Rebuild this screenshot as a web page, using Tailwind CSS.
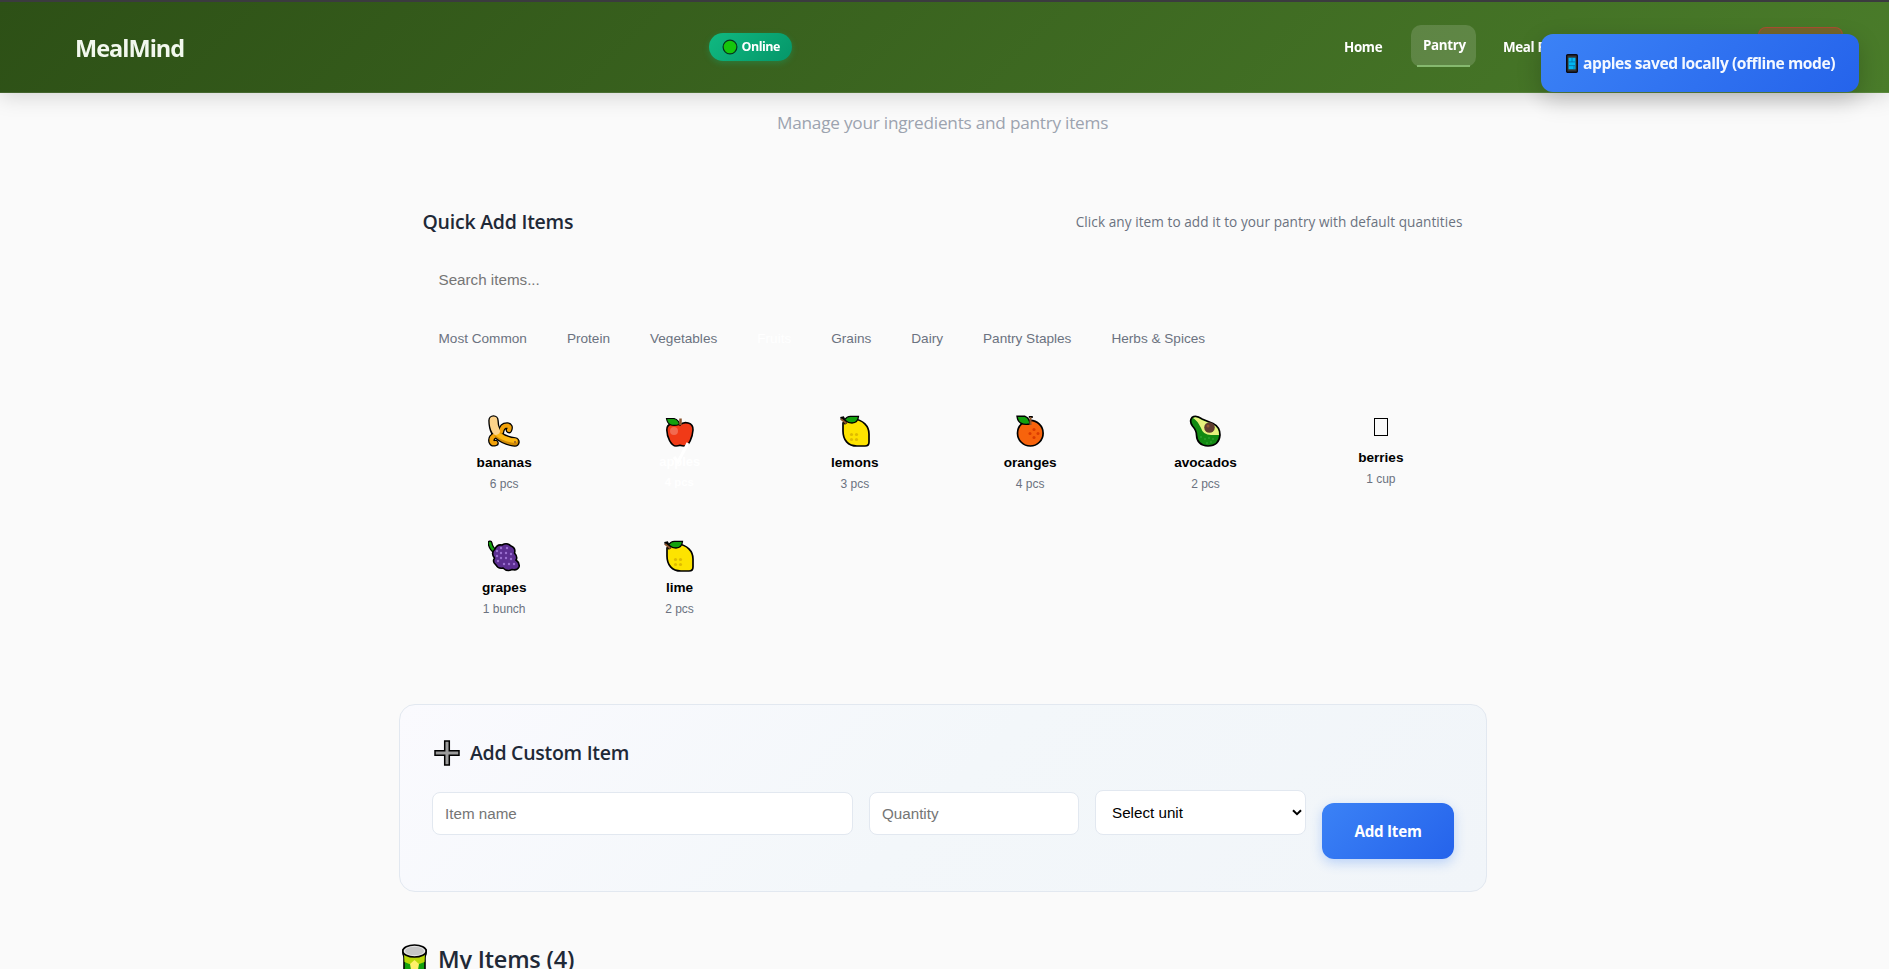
<!DOCTYPE html>
<html lang="en">
<head>
<meta charset="utf-8">
<title>MealMind</title>
<script src="https://cdn.jsdelivr.net/npm/@tailwindcss/browser@4"></script>
</head>
<body class="h-[969px] overflow-hidden bg-[#fafafa] font-['Open_Sans','Noto_Sans',sans-serif]">
<svg class="hidden">
  <symbol id="lemon" viewBox="0 0 32 32">
    <path d="M4 8C7 3.5 11 4 15 4C24 5 30 11 30 19V27Q30 31 26 31H18C9 31 4 25 4 16Z" fill="#fde300" stroke="#000" stroke-width="1.700"/>
    <path d="M1.500 3.500L4 3L7 9" fill="none" stroke="#000" stroke-width="3"/>
    <path d="M5.500 5Q8 1 12 1.300H19.500Q19 8 13 8Q9 8 5.500 5Z" fill="#13a10e" stroke="#000" stroke-width="1.300"/>
    <path d="M2 4L7.500 8.500" stroke="#8e562e" stroke-width="1.800"/>
    <g fill="#dfbb00"><circle cx="12.500" cy="19.500" r="1.600"/><circle cx="17.500" cy="19.500" r="1.600"/><circle cx="12.500" cy="24.500" r="1.600"/><circle cx="17.500" cy="24.500" r="1.600"/></g>
  </symbol>
</svg>

<header class="fixed inset-x-0 top-0 z-10 flex h-[93px] border-t-2 border-t-[#3b3b3f] bg-[linear-gradient(135deg,#2d5016,#4a7c2a)] shadow-[0_4px_20px_rgba(0,0,0,0.15),inset_0_-1px_0_rgba(255,255,255,0.1)]">
  <div class="ml-[75px] mt-[28px] w-[634px]"><span class="whitespace-nowrap text-[23.5px] leading-[36px] font-bold tracking-[-0.980px] text-[#f2f8ee]">MealMind</span></div>
  <div class="mt-[31px] flex h-7 w-[83px] items-center rounded-[14px] bg-[linear-gradient(135deg,#10b981,#059669)] pl-[12.5px] shadow-[0_2px_6px_rgba(16,185,129,0.3)]">
    <svg class="mr-[4px] size-[16px] shrink-0" viewBox="0 0 16 16"><circle cx="8" cy="8" r="6.900" fill="#16c60c" stroke="#06351f" stroke-width="1.200"/></svg>
    <span class="whitespace-nowrap text-[12.5px] leading-5 font-bold tracking-[-0.500px] text-white">Online</span>
  </div>
  <nav class="ml-[541px] mt-[23px] flex gap-4 text-[13.4px] font-bold tracking-[-0.350px] text-white">
    <a class="mt-[9px] w-[62px] pl-[11px] leading-[26px] whitespace-nowrap">Home</a>
    <a class="relative h-[42px] w-[65px] rounded-[10px] bg-white/15 px-3 leading-[41px] whitespace-nowrap">Pantry<i class="absolute bottom-0 left-[6px] h-[2px] w-[53px] bg-[#86b96f]"></i></a>
    <a class="mt-[9px] w-[110px] pl-[11px] leading-[26px] whitespace-nowrap">Meal Planner</a>
  </nav>
  <a class="absolute left-[1758px] top-[25px] h-[38px] w-[85px] rounded-[8px] border border-red-500/40 bg-red-500/25"></a>
</header>

<div class="fixed left-[1541px] top-[34px] z-20 flex h-[58px] w-[318px] items-center rounded-[12px] bg-[linear-gradient(135deg,#3b82f6,#2563eb)] pl-[25px] shadow-[0_8px_24px_rgba(0,0,0,0.2)]">
  <svg class="mr-[5px] h-[19px] w-[12px] shrink-0" viewBox="0 0 12 18" preserveAspectRatio="none"><rect x=".7" y=".7" width="10.600" height="16.600" rx="1" fill="#333" stroke="#0a0a14" stroke-width="1.400"/><rect x="2.500" y="3.500" width="7" height="11" fill="#00b7f5"/><path d="M2.500 7.500h7M2.500 11h7M6 3.500v4M8 11v3.500" stroke="#0a6ea8" stroke-width=".8"/></svg>
  <span class="whitespace-nowrap text-[15.6px] leading-6 font-bold tracking-[-0.450px] text-[#f4f8ff]">apples saved locally (offline mode)</span>
</div>

<main class="pt-[109px]">
  <p class="pl-[777px] text-[17.2px] leading-7 tracking-[-0.230px] text-[#9ca3af]">Manage your ingredients and pantry items</p>

  <section class="ml-[422.5px] mt-[70px] w-[1040px]">
    <div class="flex items-center justify-between">
      <h3 class="text-[19.5px] leading-[30px] font-semibold tracking-[-0.240px] text-[#1f2937]">Quick Add Items</h3>
      <p class="text-[13.6px] leading-5 tracking-[0.060px] text-[#6b7280]">Click any item to add it to your pantry with default quantities</p>
    </div>
    <div class="mt-[31px] pl-4 font-['Liberation_Sans',sans-serif] text-[15.2px] leading-6 text-[#757575]">Search items...</div>
    <div class="mt-[37px] flex gap-2 font-['Liberation_Sans',sans-serif] text-[13.6px] leading-5 text-[#6b7280] [&>span]:whitespace-nowrap [&>span]:px-4">
      <span>Most Common</span><span>Protein</span><span>Vegetables</span><span class="text-white">Fruits</span><span>Grains</span><span>Dairy</span><span>Pantry Staples</span><span>Herbs &amp; Spices</span>
    </div>
    <div class="mt-[50px] grid auto-rows-[113px] grid-cols-6 gap-3 text-center font-['Liberation_Sans',sans-serif] text-[12px] leading-4 text-[#6b7280] [&_b]:mb-[4px] [&_b]:mt-[7px] [&_b]:block [&_b]:text-[13.6px] [&_b]:leading-[18px] [&_b]:text-black [&_svg]:mx-auto [&_svg]:size-8 [&>div]:pt-4">
      <div>
        <svg viewBox="0 0 32 32" fill="none" stroke-linecap="round" stroke-linejoin="round">
          <g stroke="#000"><path d="M5.500 5.500Q5.500 12 8 17" stroke-width="10.500"/><path d="M10 20Q17 26 27 27" stroke-width="9.500"/><path d="M13 17Q14 10.500 19 10.500Q23 11 21 15" stroke-width="6.500"/><path d="M8 20Q2.500 22 3.500 26.500Q4.500 29 7.500 28" stroke-width="6.500"/></g>
          <path d="M13 17Q14 10.500 19 10.500Q23 11 21 15" stroke="#f2a20a" stroke-width="4"/>
          <path d="M8 20Q2.500 22 3.500 26.500Q4.500 29 7.500 28" stroke="#f2a20a" stroke-width="4"/>
          <path d="M10 20Q17 26 27 27" stroke="#d08a06" stroke-width="6.800"/>
          <path d="M9 19Q17 25 27 25.800" stroke="#fdb813" stroke-width="4.500"/>
          <path d="M5.500 5.500Q5.500 12 8 16" stroke="#fdd38a" stroke-width="7.800"/>
          <circle cx="27" cy="27" r="1" fill="#8e562e"/>
        </svg><b>bananas</b>6 pcs
      </div>
      <div class="relative">
        <svg viewBox="0 0 32 32" class="relative left-[0.5px]"><path d="M16 10C20 6 29.500 7 29 15C28.500 22 25 31 20.500 31Q18 31 16 30.300Q14 31 12 31C7 31 3 22 2.800 15C2.500 8 12 6 16 10Z" fill="#f03a17" stroke="#000" stroke-width="1.600"/><path d="M2.500 3.500H10Q15 5 15.500 9.500Q4 13 2.500 3.500Z" fill="#13a10e" stroke="#000" stroke-width="1.200"/><path d="M16.500 3.500V10" stroke="#8e562e" stroke-width="2.500"/><circle cx="10" cy="16" r="4" fill="#f26a50"/></svg>
        <b class="origin-top scale-95 text-white!">apples</b><strong class="inline-block -translate-y-0.5 scale-95 text-white">4 pcs</strong>
        <svg class="absolute left-[66px] top-[41px] overflow-visible" viewBox="0 0 32 32" fill="none"><path d="M10 17L14 22L24 3" stroke="#fff" stroke-width="3"/></svg>
      </div>
      <div><svg><use href="#lemon"/></svg><b>lemons</b>3 pcs</div>
      <div>
        <svg viewBox="0 0 32 32"><circle cx="16.300" cy="18.200" r="12.800" fill="#f7630c" stroke="#000" stroke-width="1.700"/><path d="M3 1.300H11Q15.500 3 16 9Q4 11 3 1.300Z" fill="#13a10e" stroke="#000" stroke-width="1.400"/><path d="M16.800 1V3" stroke="#000" stroke-width="4"/><path d="M16.500 2V10" stroke="#8e562e" stroke-width="2"/><g fill="#da3b01"><circle cx="20" cy="14.500" r="1.500"/><circle cx="16" cy="18.500" r="1.500"/><circle cx="24" cy="18.500" r="1.500"/><circle cx="20" cy="22.500" r="1.500"/></g></svg><b>oranges</b>4 pcs
      </div>
      <div>
        <svg viewBox="0 0 32 32"><path d="M3 2.500Q7-.500 13 4L24 8.500Q31 12 31 20Q30 31 19 31Q8 30.500 7.500 20Q7.500 15.500 3.500 11Q0 6 3 2.500Z" fill="#128a12" stroke="#000" stroke-width="1.700"/><path d="M4 3Q7 .800 13 5L24 9.500Q30 12.500 30 20H22Q14 20 12 13Q8 5 4 3Z" fill="#e5f27c"/><circle cx="20.500" cy="12.500" r="5.300" fill="#603d30"/><circle cx="19" cy="11" r="1.500" fill="#8e562e"/><g fill="#3cab3c"><circle cx="12" cy="22" r=".8"/><circle cx="16" cy="24" r=".8"/><circle cx="20" cy="23" r=".8"/><circle cx="24" cy="24" r=".8"/><circle cx="18" cy="28" r=".8"/><circle cx="22" cy="27" r=".8"/></g></svg><b>avocados</b>2 pcs
      </div>
      <div><div class="mx-auto mt-[3px] h-[18px] w-[14px] border border-black"></div><b class="mt-[13px]!">berries</b>1 cup</div>
      <div>
        <svg viewBox="0 0 32 32"><path d="M2 3Q3 9 8 12" fill="none" stroke="#000" stroke-width="5" stroke-linecap="round"/><path d="M2 3Q3 9 8 12" fill="none" stroke="#13a10e" stroke-width="2.500" stroke-linecap="round"/><path d="M7 9Q9 4 14 5Q19 2 23 6Q28 8 26.500 13Q30 17 28 20Q32 23 31 27Q29 31 24 29.500Q19 32 15 28Q10 29 8 25Q4 22 6.500 18Q2.500 13 7 9Z" fill="#5c2e91" stroke="#000" stroke-width="1.600"/><g fill="#9a6fd0"><circle cx="9" cy="11" r="1.200"/><circle cx="13" cy="8" r="1.200"/><circle cx="19" cy="8" r="1.200"/><circle cx="13" cy="13" r="1.200"/><circle cx="18" cy="13" r="1.200"/><circle cx="23" cy="14" r="1.200"/><circle cx="9" cy="16" r="1.200"/><circle cx="13" cy="18" r="1.200"/><circle cx="18" cy="18" r="1.200"/><circle cx="23" cy="19" r="1.200"/><circle cx="10" cy="21" r="1.200"/><circle cx="16" cy="24" r="1.200"/><circle cx="21" cy="24" r="1.200"/><circle cx="26" cy="24" r="1.200"/></g></svg><b>grapes</b>1 bunch
      </div>
      <div><svg><use href="#lemon"/></svg><b>lime</b>2 pcs</div>
    </div>
  </section>

  <section class="ml-[399px] mt-[67px] h-[188px] w-[1088px] rounded-[16px] border border-[#e2e8f0] bg-[linear-gradient(135deg,#fafafe_0%,#f3f7fa_50%,#f1f5f9_100%)] px-8 pt-8">
    <h3 class="flex h-[31px] items-center text-[19.5px] leading-[30px] font-semibold tracking-[-0.280px] text-[#1f2937]">
      <svg class="ml-[1.5px] mr-[10.5px] size-[26px]" viewBox="0 0 26 26"><path d="M10.700 1h4.600v9.700H25v4.600h-9.700V25h-4.600v-9.700H1v-4.600h9.700Z" fill="#9b9b9b" stroke="#000" stroke-width="1.500"/></svg>
      <span class="whitespace-nowrap">Add Custom Item</span>
    </h3>
    <div class="mt-[22px] flex items-start font-['Liberation_Sans',sans-serif] text-[15.2px]">
      <div class="mt-[2px] h-[43px] w-[421px] rounded-[8px] border border-[#e2e8f0] bg-white pl-3 leading-[42px] text-[#757575]">Item name</div>
      <div class="ml-4 mt-[2px] h-[43px] w-[210px] rounded-[8px] border border-[#e2e8f0] bg-white pl-3 leading-[42px] text-[#757575]">Quantity</div>
      <div class="ml-4 flex h-[45px] w-[211px] items-center justify-between rounded-[8px] border border-[#e2e8f0] bg-white pl-4 pr-[3px] text-black"><span class="leading-[43px]">Select unit</span><svg class="mb-px h-[7px] w-[10px]" viewBox="0 0 10 7" fill="none"><path d="M1 1.200L5 5.200L9 1.200" stroke="#000" stroke-width="2"/></svg></div>
      <button class="ml-4 mt-[13px] h-14 w-[132px] rounded-[12px] bg-[linear-gradient(135deg,#3b82f6,#2563eb)] font-['Open_Sans','Noto_Sans',sans-serif] text-[15.2px] font-bold tracking-[-0.250px] text-white shadow-[0_4px_12px_rgba(59,130,246,0.3)]">Add Item</button>
    </div>
  </section>

  <h2 class="ml-[401px] mt-[49px] flex items-start text-[23.5px] leading-[36px] font-semibold tracking-[-0.200px] text-[#1f2937]">
    <svg class="mr-[10px] mt-[3px] h-[32px] w-[27px]" viewBox="0 0 27 32"><path d="M2 6V10Q3 12 3 14V32H24V14Q24 12 25 10V6Z" fill="#13a10e" stroke="#000" stroke-width="1.600"/><path d="M3 9H24L23.500 18Q13 23 3.500 18Z" fill="#bad80a"/><path d="M9 20L13.500 16L18 20L17 26H10Z" fill="#fff06a"/><ellipse cx="13.500" cy="7" rx="11.700" ry="6" fill="#e8e8e8" stroke="#000" stroke-width="1.600"/><ellipse cx="13.500" cy="7" rx="9.500" ry="4.300" fill="#c6c6c6"/></svg>
    <span class="whitespace-nowrap">My Items (4)</span>
  </h2>
</main>
</body>
</html>
